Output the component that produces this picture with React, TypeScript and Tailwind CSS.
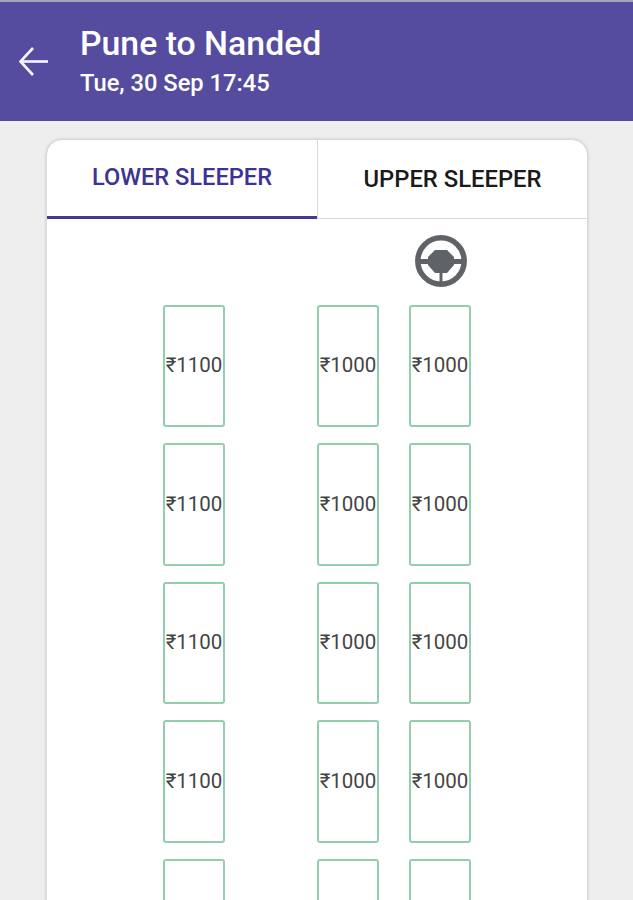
import React from "react";

const rows = [0, 1, 2, 3];

function Seat({ price }: { price?: string }) {
  return (
    <div className="w-[62px] h-[122.5px] shrink-0 rounded-[3px] border-2 border-[#93cfae] bg-white flex items-center justify-center text-[20.5px] font-[370] leading-none text-[#444444] pb-[1px]">
      {price}
    </div>
  );
}

function Wheel() {
  return (
    <svg width="52" height="52" viewBox="0 0 52 52" fill="#5f6368">
      <circle cx="26" cy="26" r="23.200" fill="none" stroke="#5f6368" strokeWidth="5.500" />
      <path d="M20 15h12l7 7v8l-7 8H20l-7-8v-8Z" />
      <path d="M3 24h10v5H3Z" />
      <path d="M39 24h10v5H39Z" />
      <path d="M24.500 34h3v15h-3Z" />
    </svg>
  );
}

export default function App() {
  return (
    <div className="w-[633px] h-[900px] overflow-hidden bg-[#eeeeee] flex flex-col font-['Roboto',sans-serif]">
      <div className="h-[2px] bg-[#a5a3b8] shrink-0" />
      <header className="h-[119px] shrink-0 bg-[#554ca0] flex items-center pl-[17px] text-white">
        <svg width="33" height="33" viewBox="0 0 33 33" fill="none" stroke="#f5f5fa" strokeWidth="2.6" className="mr-[30px] -mt-[1px]">
          <path d="M31 16.500H4" />
          <path d="M16 3 3.500 16.500 16 30" />
        </svg>
        <div className="-mt-[3px]">
          <div className="text-[33.8px] leading-[38px] font-medium mt-[1px]">Pune to Nanded</div>
          <div className="text-[23.7px] leading-[27px] font-medium mt-[7px]">Tue, 30 Sep 17:45</div>
        </div>
      </header>
      <main className="flex-1 min-h-0 pt-[18px] pl-[46px]">
        <div className="w-[542px] h-[800px] bg-white rounded-t-[16px] border border-[#d9d9d9] shadow-[0_0_3px_rgba(0,0,0,0.18)]">
          <div className="flex h-[79px] border-b-[1.5px] border-[#d8d8d8]">
            <div className="w-[270px] h-[79px] border-b-[3px] border-[#43389a] flex items-center justify-center text-[23.6px] font-[480] leading-none text-[#3d3391] pb-[1px]">
              LOWER SLEEPER
            </div>
            <div className="flex-1 border-l border-[#d8d8d8] flex items-center justify-center text-[23.8px] leading-none text-[#1a1a1a] font-[480] pt-[1px]">
              UPPER SLEEPER
            </div>
          </div>
          <div className="pl-[116px]">
            <div className="flex justify-end w-[304px] pt-[16px] h-[85.8px]">
              <Wheel />
            </div>
            <div className="flex flex-col gap-[16px]">
              {rows.map((r) => (
                <div key={r} className="flex">
                  <Seat price="₹1100" />
                  <div className="w-[92px]" />
                  <Seat price="₹1000" />
                  <div className="w-[30px]" />
                  <Seat price="₹1000" />
                </div>
              ))}
              <div className="flex">
                <Seat />
                <div className="w-[92px]" />
                <Seat />
                <div className="w-[30px]" />
                <Seat />
              </div>
            </div>
          </div>
        </div>
      </main>
    </div>
  );
}
